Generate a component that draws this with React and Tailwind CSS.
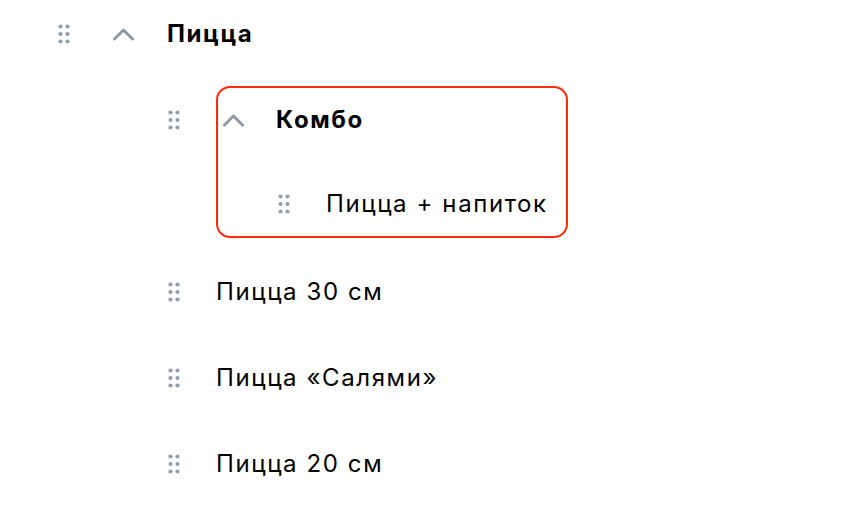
import React from "react";

const Drag = () => (
  <svg width="12" height="20" viewBox="0 0 12 20" className="shrink-0">
    {[2.5, 10, 17.5].map((cy) =>
      [2.5, 9.5].map((cx) => (
        <circle key={`${cx}-${cy}`} cx={cx} cy={cy} r="2.1" fill="#929daa" />
      ))
    )}
  </svg>
);

const Chevron = () => (
  <svg width="21" height="14" viewBox="0 0 21 14" className="shrink-0 -ml-[1px]">
    <path d="M1.5 12 L10.5 3 L19.5 12" fill="none" stroke="#8e99a5" strokeWidth="3" strokeLinecap="round" strokeLinejoin="round" />
  </svg>
);

const font = { fontFamily: "Inter, 'Noto Sans', sans-serif" };

export default function App() {
  return (
    <div className="w-[846px] h-[508px] bg-white text-[24px] tracking-[1.6px] text-black overflow-hidden" style={font}>
      <div className="flex flex-col pl-[58px]">
        {/* Level 0 */}
        <div className="flex items-center h-[68px]">
          <Drag />
          <div className="flex items-center ml-[36px] pl-[8px]">
            <Chevron />
            <span className="ml-[33px] font-bold">Пицца</span>
          </div>
        </div>

        {/* Combo group */}
        <div className="flex items-start mt-[18px] pl-[110px]">
          <div className="flex items-center h-[68px]">
            <Drag />
          </div>
          <div className="ml-[36px] w-[352px] h-[152px] border-2 border-[#ff2a0a] rounded-[14px] flex flex-col">
            <div className="flex items-center h-[64px] pl-[6px]">
              <Chevron />
              <span className="ml-[32px] font-bold">Комбо</span>
            </div>
            <div className="flex items-center h-[60px] mt-[22px] pl-[60px]">
              <Drag />
              <span className="ml-[36px]">Пицца + напиток</span>
            </div>
          </div>
        </div>

        {["Пицца 30 см", "Пицца «Салями»", "Пицца 20 см"].map((t, i) => (
          <div key={t} className={`flex items-center h-[68px] pl-[110px] ${i === 0 ? "mt-[20px]" : "mt-[18px]"}`}>
            <Drag />
            <span className="ml-[36px]">{t}</span>
          </div>
        ))}
      </div>
    </div>
  );
}
